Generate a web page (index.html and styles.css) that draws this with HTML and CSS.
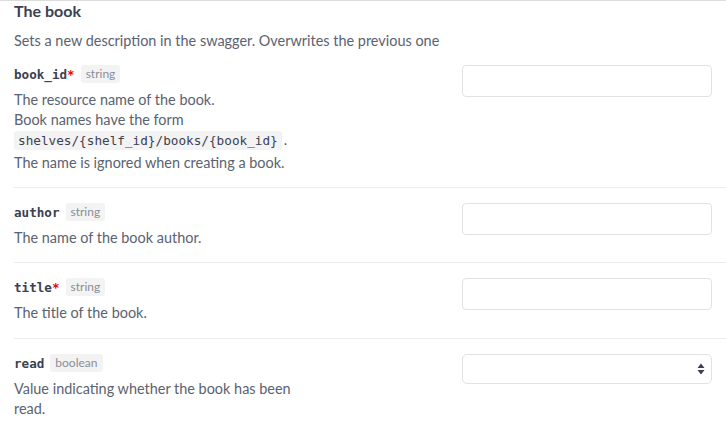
FILE: index.html
```html
<!DOCTYPE html>
<html>
<head>
<meta charset="utf-8">
<link rel="stylesheet" href="styles.css">
</head>
<body>
<div class="panel">
  <h2 class="title">The book</h2>
  <p class="intro">Sets a new description in the swagger. Overwrites the previous one</p>

  <div class="field">
    <div class="info">
      <div class="name-line"><span class="name">book_id</span><span class="req">*</span><span class="type">string</span></div>
      <div class="desc">The resource name of the book.<br>Book names have the form <code>shelves/{shelf_id}/books/{book_id}</code>.<br>The name is ignored when creating a book.</div>
    </div>
    <div class="control"><input class="input" type="text"></div>
  </div>

  <div class="field">
    <div class="info">
      <div class="name-line"><span class="name">author</span><span class="type">string</span></div>
      <div class="desc">The name of the book author.</div>
    </div>
    <div class="control"><input class="input" type="text"></div>
  </div>

  <div class="field">
    <div class="info">
      <div class="name-line"><span class="name">title</span><span class="req">*</span><span class="type">string</span></div>
      <div class="desc">The title of the book.</div>
    </div>
    <div class="control"><input class="input" type="text"></div>
  </div>

  <div class="field">
    <div class="info">
      <div class="name-line"><span class="name">read</span><span class="type">boolean</span></div>
      <div class="desc">Value indicating whether the book has been read.</div>
    </div>
    <div class="control">
      <div class="select-wrap">
        <select class="select"><option></option><option>true</option><option>false</option></select>
        <svg class="arrows" width="8" height="12" viewBox="0 0 8 12"><path d="M4 0.5 L7.5 5 H0.5 Z M4 11.5 L7.5 7 H0.5 Z" fill="#3b4151"/></svg>
      </div>
    </div>
  </div>
</div>
</body>
</html>
```

FILE: styles.css
```css
html, body {
  margin: 0;
  padding: 0;
  background: #fff;
}
body {
  font-family: "Lato", "Noto Sans", sans-serif;
  color: #3b4151;
}
.panel {
  border-top: 1px solid #dcdcdc;
  padding-left: 14px;
}
.title {
  margin: 0;
  font-size: 16px;
  line-height: 20px;
  font-weight: 700;
  color: #3b4151;
}
.intro {
  margin: 10px 0 0;
  font-size: 14.45px;
  line-height: 20px;
  color: #5b6270;
}
.field {
  display: grid;
  grid-template-columns: 1fr 250px;
  column-gap: 20px;
  padding: 13px 14px 14px 0;
  border-bottom: 1px solid #ececec;
}
.field + .field {
  padding-top: 14px;
}
.field:nth-child(5) {
  padding-bottom: 15px;
}
.field:last-child {
  border-bottom: none;
}
.info {
  max-width: 300px;
}
.name-line {
  display: flex;
  align-items: center;
  height: 20px;
}
.name {
  font-family: "DejaVu Sans Mono", monospace;
  font-weight: 700;
  font-size: 12.6px;
  color: #3b4151;
}
.req {
  color: #f20000;
  font-family: "DejaVu Sans Mono", monospace;
  font-weight: 700;
  font-size: 12.6px;
}
.type {
  margin-left: 6px;
  padding: 0 5px;
  height: 18px;
  line-height: 18px;
  background: #f3f3f3;
  border-radius: 3px;
  font-size: 12px;
  color: #8a8e96;
}
.desc {
  margin-top: 6px;
  font-size: 14.45px;
  line-height: 20px;
  color: #5b6270;
}
code {
  display: inline-block;
  font-family: "DejaVu Sans Mono", monospace;
  font-size: 12.7px;
  line-height: 19px;
  padding: 0 4px;
  margin: 1px 2px 3px 0;
  background: #f3f3f3;
  border-radius: 3px;
  color: #3b4151;
}
.control {
  padding-top: 1px;
}
.input {
  box-sizing: border-box;
  display: block;
  width: 100%;
  height: 32px;
  margin: 0;
  border: 1px solid #e2e2e2;
  border-radius: 4px;
  background: #fff;
  outline: none;
}
.select-wrap {
  position: relative;
}
.select {
  box-sizing: border-box;
  display: block;
  width: 100%;
  height: 30px;
  margin: 0;
  border: 1px solid #e2e2e2;
  border-radius: 5px;
  background: #fff;
  appearance: none;
  -webkit-appearance: none;
  outline: none;
}
.arrows {
  position: absolute;
  right: 7px;
  top: 9px;
  pointer-events: none;
}
```
